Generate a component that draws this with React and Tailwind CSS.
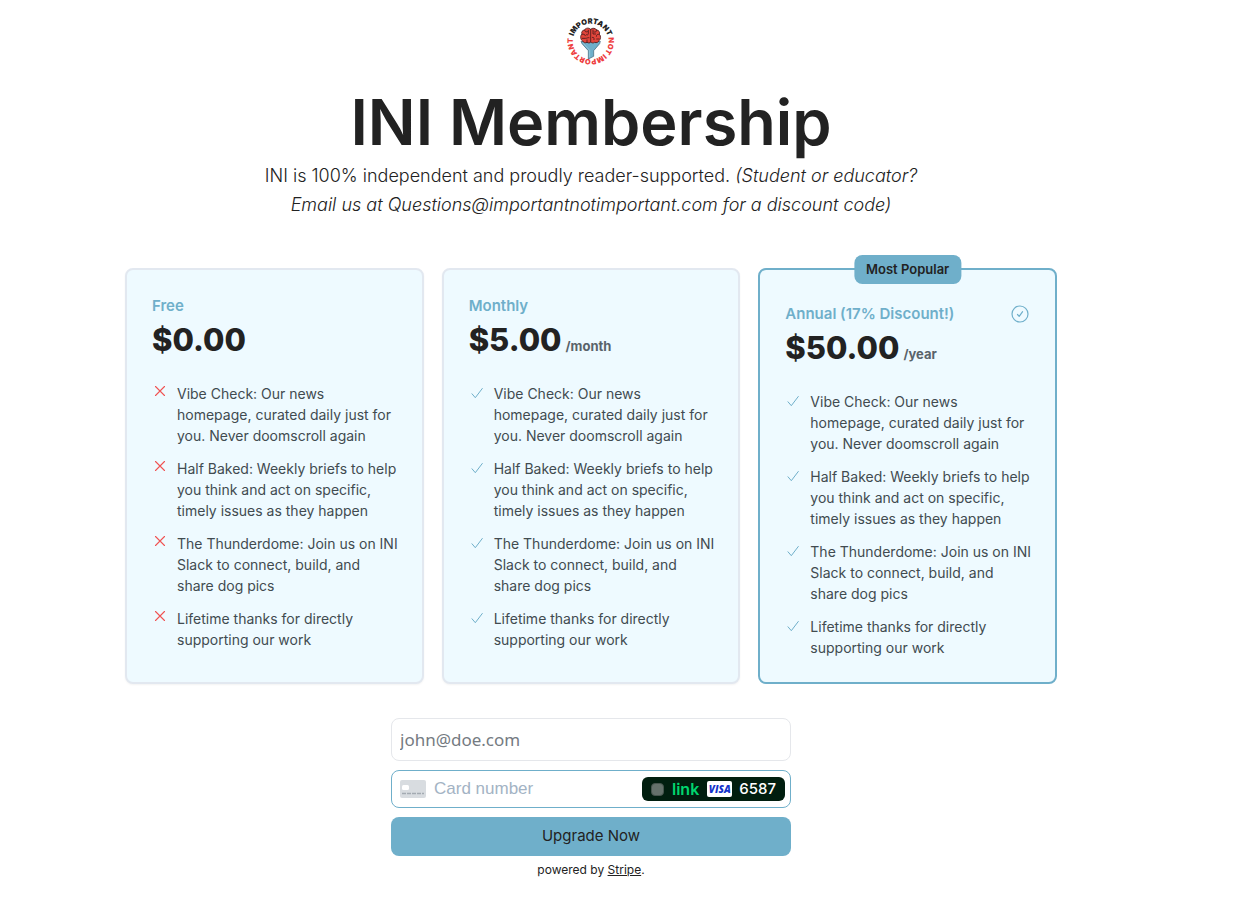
import { useState } from 'react';
import { clsx } from 'clsx';

const features = [
  'Vibe Check: Our news homepage, curated daily just for you. Never doomscroll again',
  'Half Baked: Weekly briefs to help you think and act on specific, timely issues as they happen',
  'The Thunderdome: Join us on INI Slack to connect, build, and share dog pics',
  'Lifetime thanks for directly supporting our work',
];

const plans = [
  { id: 'free', name: 'Free', price: '$0.00', included: false },
  { id: 'monthly', name: 'Monthly', price: '$5.00', period: '/month', included: true },
  { id: 'annual', name: 'Annual (17% Discount!)', price: '$50.00', period: '/year', included: true, popular: true },
];

const Logo = () => (
  <svg viewBox="0 0 192 192" className="size-16" role="img" aria-label="Important, Not Important">
    <defs>
      <path id="ring-top" d="M 41 95 A 54 54 0 0 1 149 95" />
      <path id="ring-bottom" d="M 147 78 A 54 54 0 1 1 43 80" />
    </defs>
    <g fontFamily="Inter, sans-serif" fontWeight="900" fontSize="22" textAnchor="middle">
      <text fill="#222222">
        <textPath href="#ring-top" startOffset="50%">IMPORTANT</textPath>
      </text>
      <text fill="#ee3f3f">
        <textPath href="#ring-bottom" startOffset="50%">NOT IMPORTANT</textPath>
      </text>
    </g>
    <path d="M66 94 H124 L122 101 L104 122 V139 L88 147 V122 L69 101 Z" fill="#6fafca" stroke="#3d6274" strokeWidth="2" strokeLinejoin="round" />
    <path d="M73 100 L92 121 V142" fill="none" stroke="#a6d3e4" strokeWidth="2" />
    <path
      d="M95 58 C89 52 79 54 77 60 C70 60 66 67 69 72 C63 77 64 88 70 92 C73 98 80 100 84 97 C89 100 93 99 95 96 C98 99 103 100 107 97 C112 100 119 96 120 92 C126 88 126 77 121 73 C124 67 119 60 113 60 C110 54 100 53 95 58 Z"
      fill="#e2453b"
      stroke="#4a1c1c"
      strokeWidth="2.5"
    />
    <path
      d="M95 58 V96 M77 60 C77 65 81 67 85 65 M69 73 C74 71 78 73 79 77 M88 61 V71 C88 75 84 76 82 74 M70 85 H80 C84 85 86 82 90 83 M84 97 V90 M113 60 C114 65 109 68 105 66 M102 60 V72 H110 M121 73 C116 72 112 74 112 79 M100 82 C104 80 106 84 105 89 M113 87 H120"
      fill="none"
      stroke="#4a1c1c"
      strokeWidth="2.5"
      strokeLinecap="round"
    />
  </svg>
);

const CheckIcon = () => (
  <svg viewBox="0 0 16 16" className="mt-[2px] size-4 shrink-0" fill="none" stroke="#6fafca" strokeLinecap="round" strokeLinejoin="round" aria-hidden="true">
    <path d="M3 8.8 L6.3 12.7 L13.3 3.5" />
  </svg>
);

const CrossIcon = () => (
  <svg viewBox="0 0 16 16" className="size-4 shrink-0" fill="none" stroke="#f05252" strokeWidth="1.1" strokeLinecap="round" aria-hidden="true">
    <path d="M3.5 3.5 L12.5 12.5 M12.5 3.5 L3.5 12.5" />
  </svg>
);

const SelectedIcon = () => (
  <svg viewBox="0 0 18 18" className="size-[18px] shrink-0" fill="none" stroke="#6fafca" strokeWidth="1.2" strokeLinecap="round" strokeLinejoin="round" aria-hidden="true">
    <circle cx="9" cy="9" r="8" />
    <path d="M6.5 9.5 L8.2 11.4 L11.6 6.7" />
  </svg>
);

const PlanCard = ({ plan, selected, onSelect }) => (
  <label
    className={clsx(
      'relative block cursor-pointer rounded-lg border-2 bg-[#eefaff] pr-[22px] pl-[25px]',
      selected ? 'border-[#6fafca]' : 'border-[#e2e8f0] shadow-xs',
      plan.popular ? 'pt-[33px] pb-6' : 'py-[25px]',
    )}
  >
    <input type="radio" name="plan" value={plan.id} checked={selected} onChange={onSelect} className="sr-only" />
    {plan.popular && (
      <span className="absolute -top-[15px] left-1/2 -translate-x-1/2 rounded-lg bg-[#6fafca] px-3 text-[13px] leading-[29px] font-semibold whitespace-nowrap text-[#222222]">
        Most Popular
      </span>
    )}
    <span className="flex items-center justify-between pr-1">
      <span className="text-[15px] leading-[22px] font-semibold text-[#6fafca]">{plan.name}</span>
      {selected && <SelectedIcon />}
    </span>
    <span className="flex items-baseline gap-1">
      <span className="text-[31px] leading-[46px] font-extrabold text-[#222222]">{plan.price}</span>
      {plan.period && <span className="text-[13px] font-bold text-[#59636a]">{plan.period}</span>}
    </span>
    <ul className="mt-5 space-y-3 text-[14px] leading-[21px] text-[#414b50]">
      {features.map((feature) => (
        <li key={feature} className="flex gap-[9px]">
          {plan.included ? <CheckIcon /> : <CrossIcon />}
          <span>{feature}</span>
        </li>
      ))}
    </ul>
  </label>
);

const PaymentForm = () => (
  <form className="mx-auto mt-[34px] w-full max-w-[400px] space-y-[9px]" onSubmit={(event) => event.preventDefault()}>
    <input
      type="email"
      aria-label="Email"
      placeholder="john@doe.com"
      className="block h-[43px] w-full rounded-lg border border-[#e5e7eb] bg-white px-2 font-['Noto_Sans',sans-serif] text-[17px] text-[#222222] placeholder:text-[#757b82]"
    />
    <div className="flex h-[38px] items-center rounded-lg border border-[#6fafca] bg-white pr-[5px] pl-2">
      <svg viewBox="0 0 26 18" className="mr-2 h-[18px] w-[26px] shrink-0" aria-hidden="true">
        <rect width="26" height="18" rx="2" fill="#d8dce0" />
        <rect x="2" y="5" width="7" height="5" rx="1.5" fill="#ffffff" />
        <path d="M2 13.5 H24" stroke="#a4abb2" strokeWidth="1.5" strokeDasharray="4 1" />
      </svg>
      <input
        type="text"
        inputMode="numeric"
        aria-label="Card number"
        placeholder="Card number"
        className="min-w-0 flex-1 font-['Liberation_Sans',sans-serif] text-[17px] text-[#222222] outline-none placeholder:text-[#a3b3c4]"
      />
      <button type="button" className="flex h-6 items-center rounded-md bg-[#011e0f] px-[9px] text-white">
        <span className="mr-2 size-[13px] rounded-[4px] border border-[#46544d] bg-[#65716b]" />
        <span className="mr-2 font-[Inter,sans-serif] text-[16px] leading-6 font-semibold text-[#00d66f]">link</span>
        <span className="mr-[7px] flex h-4 w-[25px] items-center justify-center rounded-[2px] bg-white font-['Open_Sans',sans-serif] text-[10px] leading-4 font-extrabold text-[#1434cb] italic">
          VISA
        </span>
        <span className="font-[Inter,sans-serif] text-[15px] leading-6 font-medium">6587</span>
      </button>
    </div>
    <button type="submit" className="block h-[39px] w-full rounded-lg bg-[#6fafca] text-[15px] text-[#222222]">
      Upgrade Now
    </button>
  </form>
);

const App = () => {
  const [selectedPlan, setSelectedPlan] = useState('annual');

  return (
    <main className="min-h-screen bg-white pt-[10px] pr-[76px] pb-4 pl-2 font-[Inter,sans-serif] text-[#222222]">
      <header className="flex flex-col items-center text-center">
        <Logo />
        <h1 className="mt-[9px] text-[63px] leading-[78px] font-semibold">INI Membership</h1>
        <p className="max-w-[684px] text-[18px] leading-[29px] font-light">
          INI is 100% independent and proudly reader-supported.{' '}
          <em>(Student or educator? Email us at Questions@importantnotimportant.com for a discount code)</em>
        </p>
      </header>

      <section className="mx-auto mt-[49px] grid max-w-[932px] grid-cols-1 gap-[18px] md:grid-cols-3">
        {plans.map((plan) => (
          <PlanCard
            key={plan.id}
            plan={plan}
            selected={selectedPlan === plan.id}
            onSelect={() => setSelectedPlan(plan.id)}
          />
        ))}
      </section>

      <PaymentForm />

      <p className="mt-1 text-center text-[12px] leading-5">
        powered by{' '}
        <a href="#stripe" className="underline">
          Stripe
        </a>
        .
      </p>
    </main>
  );
};

export default App;
